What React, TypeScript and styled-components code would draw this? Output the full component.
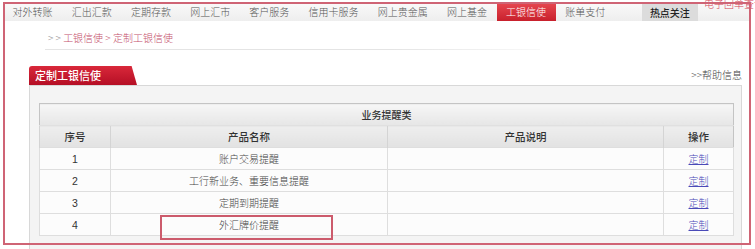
import React, { FC } from "react";
import styled, { createGlobalStyle } from "styled-components";

const GlobalStyle = createGlobalStyle`
  html, body {
    margin: 0;
    padding: 0;
    background: #ffffff;
  }

  body {
    font-family: "Noto Sans CJK SC", "Liberation Sans", sans-serif;
    color: #333333;
  }
`;

const NAV_ITEMS = [
  "对外转账",
  "汇出汇款",
  "定期存款",
  "网上汇市",
  "客户服务",
  "信用卡服务",
  "网上贵金属",
  "网上基金",
  "工银信使",
  "账单支付",
];

const ROWS = [
  { id: 1, name: "账户交易提醒" },
  { id: 2, name: "工行新业务、重要信息提醒" },
  { id: 3, name: "定期到期提醒" },
  { id: 4, name: "外汇牌价提醒" },
];

const App: FC = () => {
  return (
    <>
      <GlobalStyle />
      <Page>
        <NavBar>
          {NAV_ITEMS.map((item) => (
            <NavItem key={item} $active={item === "工银信使"}>
              {item}
            </NavItem>
          ))}
          <HotItem>热点关注</HotItem>
        </NavBar>

        <Breadcrumb>
          <Arrows>&gt; &gt; </Arrows>
          <CrumbLink>工银信使 &gt; 定制工银信使</CrumbLink>
        </Breadcrumb>

        <PanelHead>
          <Tab>定制工银信使</Tab>
          <HelpLink>&gt;&gt;帮助信息</HelpLink>
        </PanelHead>

        <Panel>
          <Table>
            <colgroup>
              <col style={{ width: 71 }} />
              <col style={{ width: 277 }} />
              <col style={{ width: 276 }} />
              <col style={{ width: 70 }} />
            </colgroup>
            <thead>
              <tr>
                <TitleCell colSpan={4}>业务提醒类</TitleCell>
              </tr>
              <tr>
                <HeadCell>序号</HeadCell>
                <HeadCell>产品名称</HeadCell>
                <HeadCell>产品说明</HeadCell>
                <HeadCell>操作</HeadCell>
              </tr>
            </thead>
            <tbody>
              {ROWS.map((row) => (
                <tr key={row.id}>
                  <NumCell>{row.id}</NumCell>
                  <Cell>{row.name}</Cell>
                  <Cell />
                  <Cell>
                    <ActionLink href="#">定制</ActionLink>
                  </Cell>
                </tr>
              ))}
            </tbody>
          </Table>
        </Panel>

        {/* annotations drawn over the screenshot */}
        <CornerText>电子回单查询</CornerText>
        <Frame />
        <Highlight />
      </Page>
    </>
  );
};

export default App;

const Page = styled.div`
  position: relative;
  width: 755px;
  height: 249px;
  overflow: hidden;

  background: #ffffff;
`;

const NavBar = styled.div`
  display: flex;
  align-items: stretch;

  height: 19px;
  margin: 2px 4px 0 3px;

  background: linear-gradient(#fafafa, #eeeeee);
`;

const NavItem = styled.div<{ $active?: boolean }>`
  display: flex;
  align-items: center;

  padding: 0 9.6px;

  font-size: 10px;
  font-weight: 300;
  white-space: nowrap;
  color: ${(p) => (p.$active ? "#ffffff" : "#555555")};
  background: ${(p) =>
    p.$active ? "linear-gradient(#e84a52, #c8202c)" : "transparent"};
`;

const HotItem = styled.div`
  display: flex;
  align-items: center;

  margin: 2px 0 0 27px;
  padding: 0 8px;

  font-size: 10px;
  font-weight: 500;
  color: #222222;
  background: #dcdcdc;
`;

const Breadcrumb = styled.div`
  width: 492px;
  height: 19px;
  margin-left: 45px;
  padding: 10px 0 0 3px;

  font-size: 10px;
  font-weight: 300;
  line-height: 14px;
  white-space: nowrap;

  background: linear-gradient(to right, #e4e4e4 70%, #f8f8f8) bottom / 100%
    1px no-repeat;
`;

const Arrows = styled.span`
  color: #888888;
`;

const CrumbLink = styled.span`
  color: #c4506c;
`;

const PanelHead = styled.div`
  display: flex;
  align-items: center;
  justify-content: space-between;

  margin: 16px 13px 0 29px;
`;

const Tab = styled.div`
  width: 102px;
  height: 19px;
  padding-left: 6px;

  font-size: 11px;
  line-height: 19px;
  font-weight: 500;
  color: #ffffff;

  border-top-left-radius: 3px;
  background: linear-gradient(#d9283a, #b50f25);
  clip-path: polygon(0 0, 95% 0, 100% 100%, 0 100%);
`;

const HelpLink = styled.div`
  margin-top: -3px;

  font-size: 10px;
  font-weight: 300;
  color: #444444;
`;

const Panel = styled.div`
  height: 200px;
  margin: 0 13px 0 29px;
  padding: 17px 8px 0 9px;

  border: 1px solid #d8d8d8;
  background: #f4f4f4;
`;

const Table = styled.table`
  width: 100%;
  table-layout: fixed;
  border-collapse: collapse;

  border: 1px solid #c4c4c4;
  background: #fcfcfc;
`;

const TitleCell = styled.th`
  height: 21px;
  padding: 0;

  font-size: 10px;
  font-weight: 500;
  color: #333333;
  text-align: center;

  background: linear-gradient(#f6f6f6, #e6e6e6);
  border-bottom: 1px solid #e0e0e0;
`;

const HeadCell = styled.th`
  height: 21px;
  padding: 0;

  font-size: 10.5px;
  font-weight: 500;
  color: #333333;
  text-align: center;

  background: linear-gradient(#eeeeee, #e2e2e2);
  border-left: 1px solid #d4d4d4;
`;

const Cell = styled.td`
  height: 21px;
  padding: 0;

  font-size: 10px;
  font-weight: 300;
  color: #444444;
  text-align: center;

  border: 1px solid #dedede;
`;

const NumCell = styled(Cell)`
  font-family: "Liberation Sans", sans-serif;
  font-size: 10.5px;
  font-weight: normal;
  color: #333333;
`;

const ActionLink = styled.a`
  font-size: 10px;
  color: #4a4ab8;
  text-decoration: underline;
`;

const CornerText = styled.div`
  position: absolute;
  top: -4px;
  left: 704px;

  font-size: 10px;
  font-weight: 300;
  white-space: nowrap;
  color: #d24555;
`;

const Frame = styled.div`
  position: absolute;
  top: 2px;
  left: 3px;
  width: 748px;
  height: 243px;
  box-sizing: border-box;

  border: 2px solid #cf6475;
  pointer-events: none;
`;

const Highlight = styled.div`
  position: absolute;
  top: 215px;
  left: 160px;
  width: 173px;
  height: 25px;
  box-sizing: border-box;

  border: 2px solid #cc5b6c;
  pointer-events: none;
`;
